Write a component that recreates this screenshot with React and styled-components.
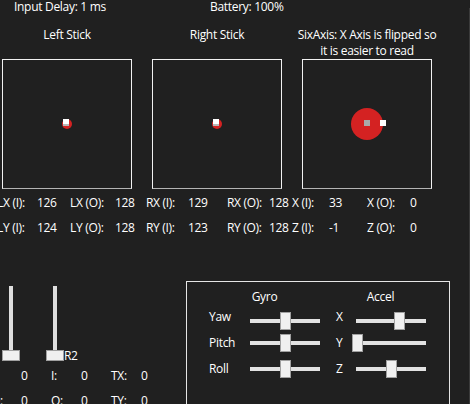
import React from 'react';
import styled, { createGlobalStyle } from 'styled-components';

const GlobalStyle = createGlobalStyle`
  html, body {
    margin: 0;
    padding: 0;
    background: #202020;
    overflow: hidden;
  }
  body {
    font-family: "Open Sans", "Noto Sans", sans-serif;
    font-size: 12px;
    letter-spacing: -0.3px;
    color: #ffffff;
  }
`;

const sticks = [
  { title: ['Left Stick'] },
  { title: ['Right Stick'] },
  { title: ['SixAxis: X Axis is flipped so', 'it is easier to read'], six: true },
];

const statRows = [
  ['LX (I):', '126', 'LX (O):', '128', 'RX (I):', '129', 'RX (O):', '128', 'X (I):', '33', 'X (O):', '0'],
  ['LY (I):', '124', 'LY (O):', '128', 'RY (I):', '123', 'RY (O):', '128', 'Z (I):', '-1', 'Z (O):', '0'],
];

const triggerRows = [
  ['I:', '0', 'I:', '0', 'TX:', '0'],
  ['O:', '0', 'O:', '0', 'TY:', '0'],
];

const motionRows = [
  { gyro: 'Yaw', gyroVal: 0.5, axis: 'X', accelVal: 0.63, lift: 4, mt: 5 },
  { gyro: 'Pitch', gyroVal: 0.5, axis: 'Y', accelVal: 0, lift: 0, mt: 4 },
  { gyro: 'Roll', gyroVal: 0.5, axis: 'Z', accelVal: 0.5, lift: 0, mt: 8 },
];

const HSlider = ({ value }) => (
  <HTrackBox>
    <HTrack />
    <HThumb style={{ left: Math.round(value * 67) }} />
  </HTrackBox>
);

const VSlider = () => (
  <VTrackBox>
    <VTrack />
    <VThumb />
  </VTrackBox>
);

const App = () => {
  return (
    <React.Fragment>
      <GlobalStyle />
      <Window>
        <Main>
          <Header>
            <HeaderItem $w={196}>Input Delay: 1 ms</HeaderItem>
            <HeaderItem>Battery: 100%</HeaderItem>
          </Header>

          <StickGrid>
            {sticks.map((s) => (
              <StickTitle key={s.title[0]}>
                <span>
                  {s.title.map((line, i) => (
                    <React.Fragment key={line}>
                      {i > 0 && <br />}
                      {line}
                    </React.Fragment>
                  ))}
                </span>
              </StickTitle>
            ))}
            {sticks.map((s) => (
              <Canvas key={s.title[0] + 'box'}>
                {s.six ? (
                  <>
                    <BigDot>
                      <InnerSquare />
                    </BigDot>
                    <OutSquare />
                  </>
                ) : (
                  <StickDot>
                    <StickSquare />
                  </StickDot>
                )}
              </Canvas>
            ))}
          </StickGrid>

          <Stats>
            {statRows.map((row) =>
              row.map((cell, i) => <StatCell key={row[0] + i}>{cell}</StatCell>)
            )}
          </Stats>

          <Bottom>
            <Triggers>
              <SliderRow>
                <VSlider />
                <VSlider />
                <TriggerLabel>R2</TriggerLabel>
              </SliderRow>
              <TriggerGrid>
                {triggerRows.map((row) =>
                  row.map((cell, i) => <StatCell key={row[0] + i}>{cell}</StatCell>)
                )}
              </TriggerGrid>
            </Triggers>

            <MotionBox>
              <MotionTitles>
                <MotionTitle $shift={-4}>Gyro</MotionTitle>
                <MotionTitle $shift={7}>Accel</MotionTitle>
              </MotionTitles>
              {motionRows.map((r) => (
                <MotionRow key={r.gyro} $mt={r.mt}>
                  <MotionLabel $lift={r.lift}>{r.gyro}</MotionLabel>
                  <HSlider value={r.gyroVal} />
                  <AxisLabel $lift={r.lift}>{r.axis}</AxisLabel>
                  <HSlider value={r.accelVal} />
                </MotionRow>
              ))}
            </MotionBox>
          </Bottom>
        </Main>
        <Edge />
      </Window>
    </React.Fragment>
  );
};

export default App;

const Window = styled.div`
  width: 470px;
  height: 404px;
  display: flex;
  align-items: flex-start;
  overflow: hidden;
`;

const Main = styled.div`
  width: 469px;
  flex-shrink: 0;
`;

const Edge = styled.div`
  align-self: stretch;
  width: 1px;
  margin-top: 8px;
  background: #3a3a3a;
`;

const Header = styled.div`
  display: flex;
  height: 27px;
  padding-left: 14px;
  line-height: 14px;
`;

const HeaderItem = styled.div`
  width: ${(p) => (p.$w ? p.$w + 'px' : 'auto')};
`;

const StickGrid = styled.div`
  display: grid;
  grid-template-columns: repeat(3, 130px);
  grid-template-rows: 32px 130px;
  column-gap: 20px;
  margin-left: 2px;
`;

const StickTitle = styled.div`
  display: flex;
  justify-content: center;
  line-height: 16px;
  white-space: nowrap;
  text-align: center;
`;

const Canvas = styled.div`
  position: relative;
  box-sizing: border-box;
  border: 1px solid #f2f2f2;
  border-bottom-color: #b4b4b4;
`;

const StickDot = styled.div`
  position: absolute;
  left: 59px;
  top: 59px;
  width: 10px;
  height: 10px;
  border-radius: 50%;
  background: #d42222;
`;

const StickSquare = styled.div`
  position: absolute;
  left: 1px;
  top: 0;
  width: 6px;
  height: 7px;
  background: linear-gradient(#ffffff 70%, #b8b8b8 70%);
`;

const BigDot = styled.div`
  position: absolute;
  left: 48px;
  top: 48px;
  width: 32px;
  height: 32px;
  border-radius: 50%;
  background: #d42222;
`;

const InnerSquare = styled.div`
  position: absolute;
  left: 13px;
  top: 12px;
  width: 6px;
  height: 6px;
  background: #a9a9a9;
`;

const OutSquare = styled.div`
  position: absolute;
  left: 77px;
  top: 60px;
  width: 6px;
  height: 6px;
  background: #ffffff;
`;

const Stats = styled.div`
  display: grid;
  grid-template-columns: 40px 33px 45px 31px 42px 39px 42px 23px 37px 38px 43px 30px;
  grid-auto-rows: 25px;
  margin-top: 1px;
  margin-left: -3px;
  line-height: 25px;
  white-space: nowrap;
`;

const StatCell = styled.div``;

const Bottom = styled.div`
  display: flex;
  margin-top: 41px;
`;

const Triggers = styled.div`
  width: 186px;
  flex-shrink: 0;
  padding-top: 3px;
`;

const SliderRow = styled.div`
  display: flex;
  gap: 26px;
  height: 78px;
  padding-left: 2px;
`;

const VTrackBox = styled.div`
  position: relative;
  width: 18px;
  height: 78px;
`;

const VTrack = styled.div`
  position: absolute;
  left: 7px;
  top: 2px;
  bottom: 8px;
  width: 4px;
  background: #dedede;
`;

const VThumb = styled.div`
  position: absolute;
  left: 0;
  bottom: 1px;
  box-sizing: border-box;
  width: 18px;
  height: 11px;
  background: #f0f0f0;
  border: 1px solid #a0a0a0;
`;

const TriggerLabel = styled.div`
  align-self: flex-end;
  margin-left: -26px;
  line-height: 12px;
`;

const TriggerGrid = styled.div`
  display: grid;
  grid-template-columns: repeat(6, 30px);
  grid-auto-rows: 25px;
  margin-top: 1px;
  margin-left: -9px;
  line-height: 25px;
  white-space: nowrap;
`;

const MotionBox = styled.div`
  box-sizing: border-box;
  flex-shrink: 0;
  width: 264px;
  height: 140px;
  border: 1px solid #e6e6e6;
  padding: 5px 0 0 22px;
`;

const MotionTitles = styled.div`
  display: grid;
  grid-template-columns: 115px 106px;
  height: 20px;
  line-height: 20px;
`;

const MotionTitle = styled.div`
  text-align: center;
  padding-left: ${(p) => (p.$shift > 0 ? p.$shift : 0)}px;
  padding-right: ${(p) => (p.$shift < 0 ? -p.$shift : 0)}px;
`;

const MotionRow = styled.div`
  display: grid;
  grid-template-columns: 37px 78px 28px 78px;
  height: 18px;
  margin-top: ${(p) => p.$mt}px;
`;

const MotionLabel = styled.div`
  line-height: 18px;
  margin-top: ${(p) => -p.$lift}px;
`;

const AxisLabel = styled(MotionLabel)`
  padding-left: 12px;
`;

const HTrackBox = styled.div`
  position: relative;
  width: 78px;
  height: 18px;
`;

const HTrack = styled.div`
  position: absolute;
  left: 4px;
  right: 4px;
  top: 7px;
  height: 4px;
  background: #e2e2e2;
`;

const HThumb = styled.div`
  position: absolute;
  top: 0;
  box-sizing: border-box;
  width: 11px;
  height: 18px;
  background: #f0f0f0;
  border: 1px solid #a0a0a0;
`;
